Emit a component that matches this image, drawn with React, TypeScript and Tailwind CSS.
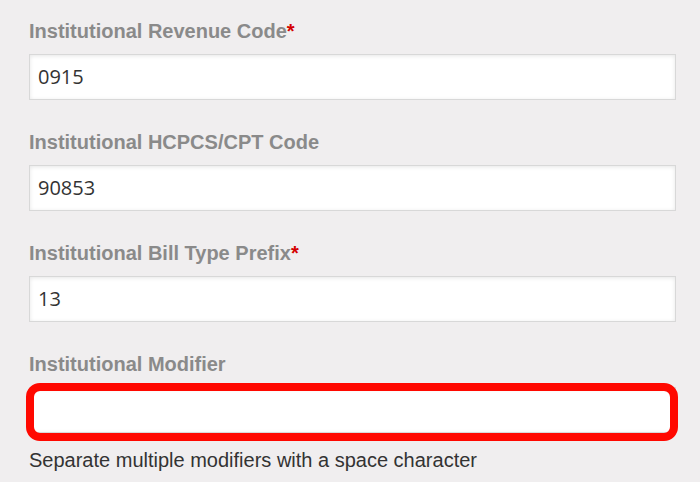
const fields = [
  { label: 'Institutional Revenue Code', required: true, value: '0915' },
  { label: 'Institutional HCPCS/CPT Code', required: false, value: '90853' },
  { label: 'Institutional Bill Type Prefix', required: true, value: '13' },
];

function Label({ text, required }: { text: string; required?: boolean }) {
  return (
    <label className="block h-6 text-[20px] leading-6 font-bold text-[#8a8a8a] font-['Liberation_Sans',Arial,sans-serif]">
      {text}
      {required && <span className="text-[#d40000]">*</span>}
    </label>
  );
}

function TextInput({ value }: { value: string }) {
  return (
    <div className="mt-[11px] h-[46px] flex items-center bg-white border border-[#d8d8d8] shadow-[inset_0_1px_4px_rgba(0,0,0,0.1)] pl-[8px] text-[20px] text-[#333] font-['Open_Sans',sans-serif]">
      {value}
    </div>
  );
}

export default function App() {
  return (
    <div className="w-[700px] h-[482px] overflow-hidden bg-[#f0eeef] pt-[19px] pl-[29px] pr-[24px]">
      {fields.map((f) => (
        <div key={f.label} className="mb-[30px]">
          <Label text={f.label} required={f.required} />
          <TextInput value={f.value} />
        </div>
      ))}

      <div>
        <Label text="Institutional Modifier" />
        <div className="relative">
          <TextInput value="" />
          {/* highlight ring */}
          <div className="absolute -left-[3px] -right-[2px] -top-[4px] -bottom-[8px] border-[8px] border-[#ff0800] rounded-[14px]" />
        </div>
        <p className="mt-[15px] text-[20px] leading-6 text-[#333] font-['Liberation_Sans',Arial,sans-serif]">
          Separate multiple modifiers with a space character
        </p>
      </div>
    </div>
  );
}
